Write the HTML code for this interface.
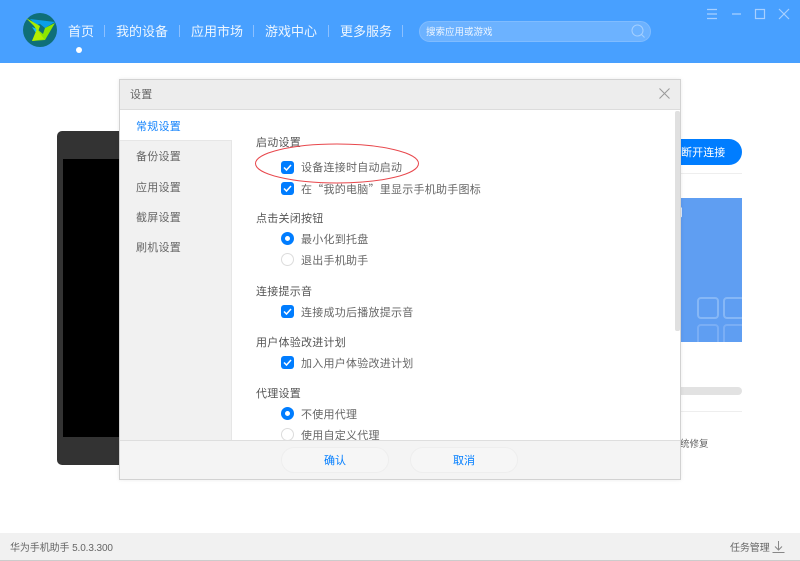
<!DOCTYPE html>
<html lang="zh-CN"><head><meta charset="utf-8"><title>华为手机助手</title>
<style>
html,body{margin:0;padding:0}
body{width:800px;height:561px;overflow:hidden;position:relative;background:#fff;font-family:"Liberation Sans","Noto Sans CJK SC",sans-serif;color:#666}
div,span,svg{position:absolute}
.t{white-space:nowrap;font-size:11px;letter-spacing:.25px;line-height:16px;height:16px;filter:blur(.25px)}
.h{color:#555}
.n{white-space:nowrap;font-size:13px;color:#eef6ff;line-height:18px;top:23px;filter:blur(.25px)}
.sep{top:25px;width:1px;height:12px;background:#8cc0ff}
.s{left:136px;color:#666}
.cb{left:281px;width:13px;height:13px;border-radius:3px;background:#007dff}
.r{left:281px;width:13px;height:13px;border-radius:50%;box-sizing:border-box}
.on{border:4px solid #007dff;background:#fff}
.off{border:1px solid #dcdcdc;background:#fff}
.btn{top:447px;width:108px;height:26px;box-sizing:border-box;border:1px solid #eee;border-radius:13px;background:#f6f6f6;color:#007dff;font-size:11px;line-height:26px;text-align:center;filter:blur(.25px)}
</style></head><body>
<div style="left:0;top:0;width:800px;height:63px;background:#48a0ff"></div>
<svg style="left:23px;top:13px" width="35" height="35" viewBox="0 0 35 35">
<circle cx="17" cy="17" r="17" fill="#0f6f78"/>
<path d="M7 6L32 9 22 15 17 11 13 12z" fill="#0a9ee8"/>
<path d="M9 14L14 16 17 22 13 20z" fill="#18c4ee"/>
<path d="M32 10L22 27 9 28 14 16 20 21 22 15z" fill="#8de600"/>
<path d="M9 28L14 16 21 26z" fill="#b5ee00"/>
<path d="M3 5L17 13 15 19 11 13z" fill="#a8ec00"/>
</svg>
<span class="n" style="left:68px">首页</span><div class="sep" style="left:104px"></div>
<span class="n" style="left:116px">我的设备</span><div class="sep" style="left:179px"></div>
<span class="n" style="left:191px">应用市场</span><div class="sep" style="left:253px"></div>
<span class="n" style="left:265px">游戏中心</span><div class="sep" style="left:328px"></div>
<span class="n" style="left:340px">更多服务</span><div class="sep" style="left:402px"></div>
<div style="left:76px;top:47px;width:6px;height:6px;border-radius:50%;background:#fff"></div>
<div style="left:419px;top:21px;width:232px;height:21px;box-sizing:border-box;border:1px solid #80bcff;border-radius:11px;background:#6cb2ff"></div>
<span class="t" style="left:426px;top:23.500px;font-size:9.500px;letter-spacing:0;color:#eef6ff;line-height:17px;height:17px">搜索应用或游戏</span>
<svg style="left:630px;top:23px" width="16" height="16" viewBox="0 0 16 16" fill="none" stroke="#a5d0ff" stroke-width="1"><circle cx="7.500" cy="7.500" r="5.500"/><path d="M11.500 11.500L14.500 14.500"/></svg>
<svg style="left:700px;top:5px" width="95" height="16" viewBox="0 0 95 16" fill="none" stroke="#a8d0ff" stroke-width="1.200"><path d="M7 4.500H17M7 9H17M7 13.500H17M32 9H41"/><rect x="55.500" y="4.500" width="9" height="9"/><path d="M79 4L89 14M89 4L79 14"/></svg>

<div style="left:57px;top:131px;width:70px;height:334px;border-radius:5px;background:#333"></div>
<div style="left:63px;top:159px;width:64px;height:278px;background:#000"></div>

<div style="left:660px;top:139px;width:82px;height:26px;border-radius:13px;background:#007dff"></div>
<span class="t" style="left:681px;top:145px;color:#fff;letter-spacing:.1px">断开连接</span>
<div style="left:660px;top:173px;width:82px;height:1px;background:#eee"></div>
<div style="left:660px;top:198px;width:82px;height:144px;background:#5f9ef2;overflow:hidden">
<span style="left:37px;top:99px;box-sizing:border-box;border:2px solid #86b7f6;border-radius:4px;width:22px;height:22px"></span>
<span style="left:63px;top:99px;box-sizing:border-box;border:2px solid #86b7f6;border-radius:4px;width:22px;height:22px"></span>
<span style="left:37px;top:126px;box-sizing:border-box;border:2px solid #7aaef5;border-radius:4px;width:22px;height:22px"></span>
<span style="left:63px;top:126px;box-sizing:border-box;border:2px solid #7aaef5;border-radius:4px;width:22px;height:22px"></span>
<span style="left:12px;top:7px;color:#fff;font-size:11px;line-height:16px">用</span>
</div>
<div style="left:660px;top:387px;width:82px;height:8px;border-radius:4px;background:#e2e2e2"></div>
<div style="left:660px;top:411px;width:82px;height:1px;background:#eee"></div>
<span class="t" style="left:680px;top:437px;font-size:9.500px;letter-spacing:0">统修复</span>

<div style="left:0;top:533px;width:800px;height:28px;background:#f1f1f1;border-bottom:1px solid #ccc;box-sizing:border-box"></div>
<span class="t" style="left:10px;top:541px;font-size:10px;letter-spacing:-.1px">华为手机助手 5.0.3.300</span>
<span class="t" style="left:730px;top:541px;font-size:10px;letter-spacing:-.1px">任务管理</span>
<svg style="left:772px;top:541px" width="14" height="13" viewBox="0 0 14 13" fill="none" stroke="#888"><path d="M6.500 0V9M3 5.500L6.500 9 10 5.500M0.500 11.500H12.500"/></svg>

<div style="left:119px;top:79px;width:562px;height:401px;box-sizing:border-box;border:1px solid #d2d2d2;background:#fff;overflow:hidden;box-shadow:0 0 4px rgba(0,0,0,.08)">
<div style="left:0;top:0;width:560px;height:30px;background:#ededed;border-bottom:1px solid #dcdcdc;box-sizing:border-box"></div>
<div style="left:0;top:60px;width:112px;height:300px;background:#f1f1f1;border-right:1px solid #e6e6e6;border-top:1px solid #e6e6e6;box-sizing:border-box"></div>
<div style="left:555px;top:31px;width:5px;height:220px;background:#e0e0e0;border-radius:2px"></div>
<div style="left:0;top:360px;width:560px;height:39px;background:#f4f4f4;border-top:1px solid #dedede;box-sizing:border-box"></div>
</div>
<span class="t" style="left:130px;top:87px;letter-spacing:.2px">设置</span>
<svg style="left:658px;top:87px" width="13" height="13" viewBox="0 0 13 13" fill="none" stroke="#999" stroke-width="1"><path d="M1.500 1.500L11.500 11.500M11.500 1.500L1.500 11.500"/></svg>
<span class="t s" style="top:119px;color:#1684fc">常规设置</span>
<span class="t s" style="top:149px">备份设置</span>
<span class="t s" style="top:180px">应用设置</span>
<span class="t s" style="top:210px">截屏设置</span>
<span class="t s" style="top:240px">刷机设置</span>

<span class="t h" style="left:256px;top:135px">启动设置</span>
<span class="t h" style="left:256px;top:211px">点击关闭按钮</span>
<span class="t h" style="left:256px;top:284px">连接提示音</span>
<span class="t h" style="left:256px;top:335px">用户体验改进计划</span>
<span class="t h" style="left:256px;top:386px">代理设置</span>

<span class="t" style="left:301px;top:160px">设备连接时自动启动</span>
<span class="t" style="left:301px;top:181px;font-family:'Noto Sans CJK SC',sans-serif">在“我的电脑”里显示手机助手图标</span>
<span class="t" style="left:301px;top:232px">最小化到托盘</span>
<span class="t" style="left:301px;top:253px">退出手机助手</span>
<span class="t" style="left:301px;top:305px">连接成功后播放提示音</span>
<span class="t" style="left:301px;top:356px">加入用户体验改进计划</span>
<span class="t" style="left:301px;top:407px">不使用代理</span>
<span class="t" style="left:301px;top:428px;height:12px;overflow:hidden">使用自定义代理</span>

<div class="cb" style="top:161px"></div><svg style="left:281px;top:161px" width="13" height="13" fill="none" stroke="#fff" stroke-width="1.500"><path d="M3 6.500L5.500 9 10 4"/></svg>
<div class="cb" style="top:182px"></div><svg style="left:281px;top:182px" width="13" height="13" fill="none" stroke="#fff" stroke-width="1.500"><path d="M3 6.500L5.500 9 10 4"/></svg>
<div class="cb" style="top:305px"></div><svg style="left:281px;top:305px" width="13" height="13" fill="none" stroke="#fff" stroke-width="1.500"><path d="M3 6.500L5.500 9 10 4"/></svg>
<div class="cb" style="top:356px"></div><svg style="left:281px;top:356px" width="13" height="13" fill="none" stroke="#fff" stroke-width="1.500"><path d="M3 6.500L5.500 9 10 4"/></svg>
<div class="r on" style="top:232px"></div>
<div class="r off" style="top:253px"></div>
<div class="r on" style="top:407px"></div>
<div style="left:281px;top:428px;width:13px;height:12px;overflow:hidden"><span class="r off" style="left:0;top:0"></span></div>

<svg style="left:250px;top:140px" width="175" height="50" fill="none"><ellipse cx="87" cy="23.500" rx="81.500" ry="19.500" stroke="#e8474c" stroke-width="1"/></svg>

<div class="btn" style="left:281px">确认</div>
<div class="btn" style="left:410px">取消</div>
</body></html>
